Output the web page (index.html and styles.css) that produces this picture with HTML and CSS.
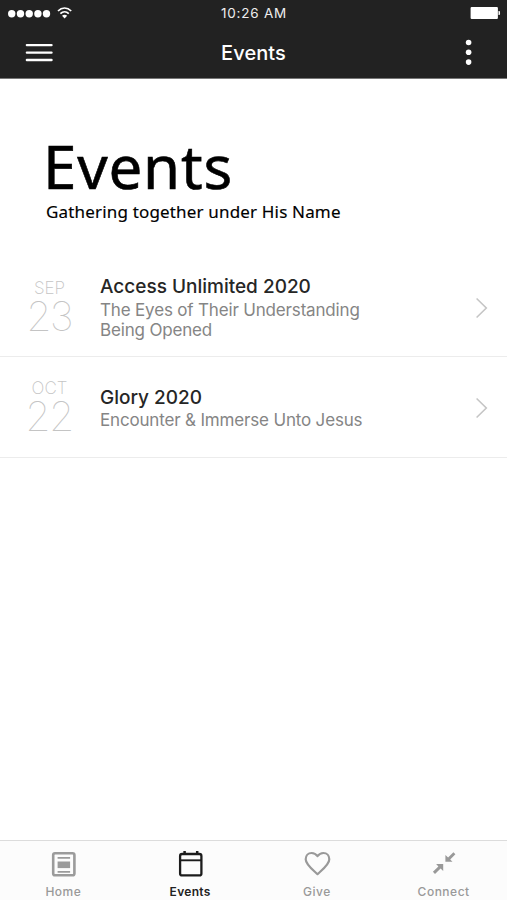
FILE: index.html
```html
<!DOCTYPE html>
<html lang="en">
<head>
<meta charset="utf-8">
<title>Events</title>
<link rel="stylesheet" href="styles.css">
</head>
<body>
<header class="header">
  <div class="status">
    <svg class="signal" width="70" height="16" viewBox="0 0 70 16" fill="#fff">
      <circle cx="3.7" cy="8.7" r="3.7"/><circle cx="12.5" cy="8.7" r="3.7"/><circle cx="21.2" cy="8.7" r="3.7"/><circle cx="29.9" cy="8.7" r="3.7"/><circle cx="38.5" cy="8.7" r="3.7"/>
      <g fill="none" stroke="#fff" stroke-width="1.7"><path d="M50 6c3.900-4 9.300-4 13.200 0M52.400 8.700c2.500-2.400 5.900-2.400 8.400 0"/></g>
      <path d="M54 10.700c1.600-1.300 3.600-1.300 5.200 0L56.600 13.400z"/>
    </svg>
    <span class="time">10:26 AM</span>
    <svg class="battery" width="31" height="14" viewBox="0 0 31 14" fill="#fff"><rect x="0.600" y="1" width="27.300" height="12" rx="1"/><path d="M28.500 5h1.200q.8 2 0 4h-1.200z"/></svg>
  </div>
  <nav class="navbar">
    <svg class="menu" width="28" height="20" viewBox="0 0 28 20" stroke="#fff" stroke-width="2.400" stroke-linecap="round"><path d="M1.900 2.100h24.600M1.900 9.600h24.600M1.900 17h24.600"/></svg>
    <h1 class="nav-title">Events</h1>
    <svg class="more" width="8" height="28" viewBox="0 0 8 28" fill="#fff"><circle cx="4.600" cy="3.500" r="2.800"/><circle cx="4.600" cy="13.300" r="2.800"/><circle cx="4.600" cy="23.100" r="2.800"/></svg>
  </nav>
</header>
<main class="content">
  <section class="banner">
    <h2 class="banner-title">Events</h2>
    <p class="banner-sub">Gathering together under His Name</p>
  </section>
  <article class="event first">
    <div class="date"><span class="month">SEP</span><span class="day">23</span></div>
    <div class="info"><h3 class="name">Access Unlimited 2020</h3><p class="desc">The Eyes of Their Understanding<br>Being Opened</p></div>
    <svg class="chevron" width="14" height="22" viewBox="0 0 14 22"><path d="M1.600 1.500l9.700 9.500L1.600 20.500"/></svg>
  </article>
  <article class="event second">
    <div class="date"><span class="month">OCT</span><span class="day">22</span></div>
    <div class="info"><h3 class="name">Glory 2020</h3><p class="desc">Encounter &amp; Immerse Unto Jesus</p></div>
    <svg class="chevron" width="14" height="22" viewBox="0 0 14 22"><path d="M1.600 1.500l9.700 9.500L1.600 20.500"/></svg>
  </article>
</main>
<footer class="tabs">
  <a class="tab">
    <svg width="28" height="28" viewBox="0 0 28 28" fill="none" stroke="#9b9b9b"><rect x="4.200" y="3.300" width="21.200" height="22" rx="1.800" stroke-width="2.600"/><path d="M8.600 7.800h12.500M8.600 21.800h12.500" stroke-width="1.800"/><path d="M8.600 14.800h12.500" stroke-width="6.600"/></svg>
    <span>Home</span>
  </a>
  <a class="tab active">
    <svg width="28" height="28" viewBox="0 0 28 28" fill="none" stroke="#1c1c1c" stroke-width="2.300"><rect x="4.100" y="4" width="21.300" height="21.400" rx="2"/><path d="M4.100 10.300h21.300" stroke-width="1.900"/><path d="M8.600 1v4M21.200 1v4" stroke-width="2.500"/></svg>
    <span>Events</span>
  </a>
  <a class="tab">
    <svg width="28" height="28" viewBox="0 0 28 28" fill="none" stroke="#999" stroke-width="2.200" stroke-linejoin="round"><path d="M14.500 24.200C9.800 19.800 2.700 14.700 2.700 9.300C2.700 5.500 5.300 3 8.600 3C11 3 13 4.100 14.500 6.100C16 4.100 18 3 20.400 3C23.700 3 26.300 5.500 26.300 9.300C26.300 14.700 19.200 19.800 14.500 24.200Z"/></svg>
    <span>Give</span>
  </a>
  <a class="tab">
    <svg width="28" height="28" viewBox="0 0 28 28" fill="#999"><path d="M15.400 4.900v6.900h7.100l-2.300-2.300L25.400 4.300 23.400 2.200 18.100 7.500zM13.200 14.100H6.100l2.300 2.300L2.900 21.800 5 23.900 10.600 18.500l2.600 2.600z"/></svg>
    <span>Connect</span>
  </a>
</footer>
</body>
</html>
```

FILE: styles.css
```css
* { box-sizing: border-box; margin: 0; padding: 0; }
body { width: 507px; height: 900px; display: flex; flex-direction: column; background: #fff; font-family: Inter, "Liberation Sans", sans-serif; overflow: hidden; }
svg { display: block; }
.header { height: 79px; background: #222; border-bottom: 1px solid #777; color: #fff; }
.status { height: 27px; display: grid; grid-template-columns: 1fr auto 1fr; align-items: center; padding: 0 6px 0 8px; }
.signal { align-self: start; margin-top: 5px; }
.battery { justify-self: end; margin-bottom: 1px; }
.time { font-size: 13.5px; letter-spacing: 0.75px; line-height: 27px; color: #eee; margin-left: -1px; }
.navbar { height: 51px; display: grid; grid-template-columns: 1fr auto 1fr; align-items: center; padding: 0 35px 0 25px; }
.nav-title { font-size: 20px; font-weight: 550; letter-spacing: 0.1px; line-height: 50px; margin-left: 10px; }
.more { justify-self: end; }
.content { flex: 1; }
.banner { height: 179px; padding: 48px 0 0 41px; color: #000; font-family: "Noto Sans", sans-serif; }
.banner-title { font-size: 60px; font-weight: 400; letter-spacing: 0.8px; line-height: 78px; margin-left: 2px; -webkit-text-stroke: 0.6px #000; }
.banner-sub { font-size: 17px; line-height: 24px; margin: -5px 0 0 5px; letter-spacing: 0.17px; -webkit-text-stroke: 0.15px #000; }
.event { display: flex; align-items: center; border-bottom: 1px solid #ececec; padding-right: 18px; }
.first { height: 99px; padding-top: 1px; }
.second { height: 101px; padding-top: 1px; }
.date { width: 99px; display: flex; flex-direction: column; align-items: center; color: #c4c4c4; font-weight: 200; padding-bottom: 5px; }
.month { font-size: 17px; line-height: 21px; }
.day { font-size: 41px; font-weight: 100; line-height: 34px; letter-spacing: -1.8px; padding-right: 1px; }
.info { flex: 1; padding-left: 1px; }
.first .info { padding-bottom: 2px; }
.name { font-size: 19px; font-weight: 500; line-height: 26px; color: #262626; }
.desc { font-size: 17px; letter-spacing: -0.17px; line-height: 20px; color: #858585; }
.second .desc { margin-top: -1px; }
.chevron { fill: none; stroke: #c5c5c5; stroke-width: 1.6; }
.tabs { height: 60px; border-top: 1px solid #dcdcdc; background: #fcfcfc; display: grid; grid-template-columns: repeat(4, 1fr); }
.tab { display: flex; flex-direction: column; align-items: center; padding-top: 9px; color: #999; font-size: 12px; font-weight: 500; letter-spacing: 0.5px; }
.tab span { line-height: 16px; margin-top: 6px; }
.active { color: #222; font-weight: 600; letter-spacing: 0.3px; }
```
